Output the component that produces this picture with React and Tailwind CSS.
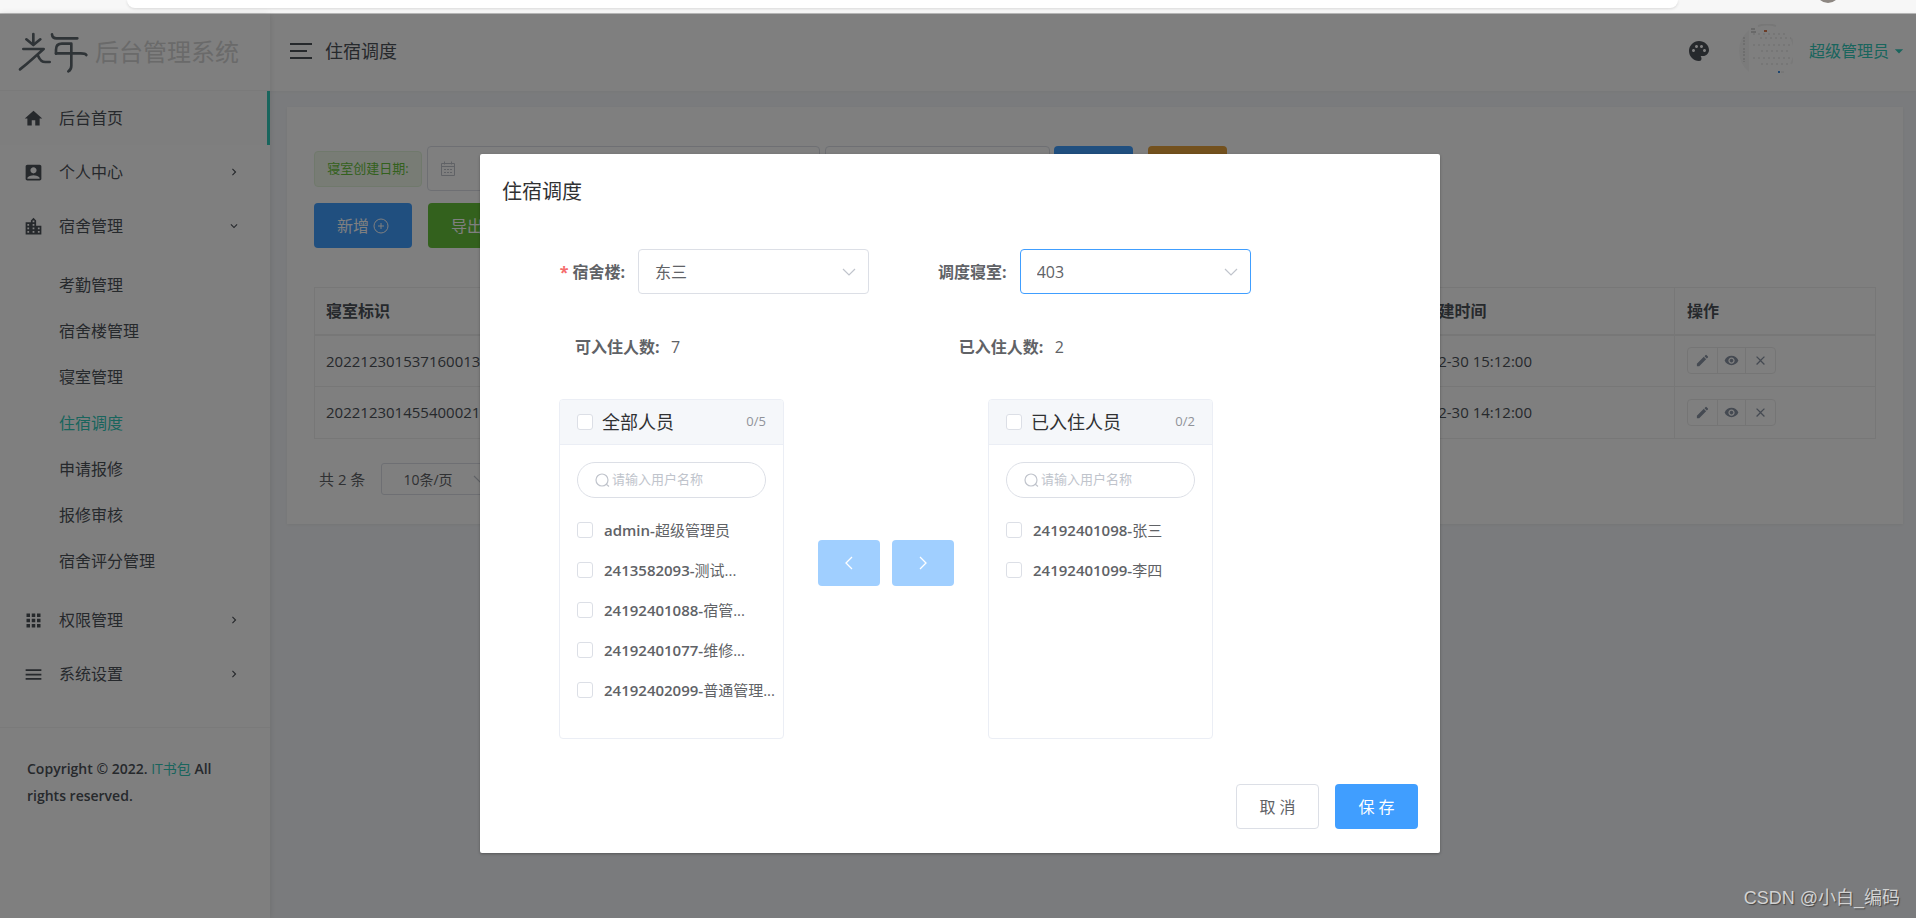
import React, { useState } from "react";
import {
  MdHome,
  MdAccountBox,
  MdLocationCity,
  MdApps,
  MdMenu,
  MdChevronRight,
  MdExpandMore,
  MdPalette,
  MdEdit,
  MdVisibility,
  MdClose,
  MdArrowDropDown,
} from "react-icons/md";

const dormMenu = [
  "考勤管理",
  "宿舍楼管理",
  "寝室管理",
  "住宿调度",
  "申请报修",
  "报修审核",
  "宿舍评分管理",
];

const rooms = [
  { id: "2022123015371600131", created: "2022-12-30 15:12:00" },
  { id: "2022123014554000214", created: "2022-12-30 14:12:00" },
];

const allUsers = [
  { account: "admin", name: "超级管理员" },
  { account: "2413582093", name: "测试..." },
  { account: "24192401088", name: "宿管..." },
  { account: "24192401077", name: "维修..." },
  { account: "24192402099", name: "普通管理..." },
];

const roomUsers = [
  { account: "24192401098", name: "张三" },
  { account: "24192401099", name: "李四" },
];

function Logo() {
  return (
    <svg
      viewBox="50 50 216 129"
      className="w-[72px] h-[43px] text-[#5f686f]"
      fill="none"
      stroke="currentColor"
      strokeWidth="8"
      strokeLinecap="round"
      strokeLinejoin="round"
      aria-hidden="true"
    >
      <path d="M99 59v30" />
      <path d="M78 75l21 17 21-17" />
      <path d="M69 104h61l-33 29q-20 18-38 32" />
      <path d="M113 124q8 19 22 19h13" />
      <path d="M155 60q1 12 14 12h62" />
      <path d="M167 118v-12q0-18 18-18h28v66q0 12-9 17" />
      <path d="M167 117h74q14 0 17 5" />
    </svg>
  );
}

function MenuItem({ icon: Icon, label, active, arrow: Arrow }) {
  return (
    <a
      href="#"
      className={`flex items-center h-[54px] pl-[23px] pr-[29px] ${
        active ? "bg-black/[0.01] border-r-[3px] border-[#33cabb]" : ""
      }`}
    >
      <Icon className="size-[21px]" />
      <span className="ml-[15px] flex-1">{label}</span>
      {Arrow && <Arrow className="size-[14px]" />}
    </a>
  );
}

function Sidebar() {
  return (
    <aside className="w-[270px] shrink-0 bg-white shadow-[0_0_6px_rgba(0,0,0,0.12)] z-10">
      <div className="h-[77px] flex items-center pl-[17px] border-b border-[#f4f4f5]">
        <Logo />
        <span className="ml-[6px] text-2xl text-[#d4d4d4]">后台管理系统</span>
      </div>
      <nav>
        <MenuItem icon={MdHome} label="后台首页" active />
        <MenuItem icon={MdAccountBox} label="个人中心" arrow={MdChevronRight} />
        <MenuItem icon={MdLocationCity} label="宿舍管理" arrow={MdExpandMore} />
        <ul className="py-[9px]">
          {dormMenu.map((name) => (
            <li key={name}>
              <a
                href="#"
                className={`flex items-center h-[46px] pl-[59px] ${
                  name === "住宿调度" ? "text-[#33cabb]" : ""
                }`}
              >
                {name}
              </a>
            </li>
          ))}
        </ul>
        <MenuItem icon={MdApps} label="权限管理" arrow={MdChevronRight} />
        <MenuItem icon={MdMenu} label="系统设置" arrow={MdChevronRight} />
      </nav>
      <p className="mt-[26px] border-t border-[#f4f4f5] pt-[27px] pl-[27px] pr-6 text-[14px] leading-[27px] font-semibold">
        Copyright © 2022.{" "}
        <a href="#" className="font-normal text-[#33cabb]">
          IT书包
        </a>{" "}
        All rights reserved.
      </p>
    </aside>
  );
}

function Avatar() {
  return (
    <svg viewBox="0 0 54 54" className="size-[54px]" aria-hidden="true">
      <circle cx="27" cy="27" r="26.5" fill="#fff" />
      <path d="M10 6v42a27 27 0 0 1-10-21a27 27 0 0 1 10-21z" fill="#f7f7f7" />
      <path d="M52 14a27 27 0 0 1 0 26" stroke="#f3f3f3" strokeWidth="2" fill="none" />
      <path d="M19 2q9-3 18 0" stroke="#eee" strokeWidth="2" fill="none" />
      <path d="M12 5h4M12 8h5" stroke="#d2d2d2" strokeWidth="2" />
      <path d="M25 7h3" stroke="#d97a50" strokeWidth="2" />
      <path d="M5 13v8M5 24v8M5 34v4" stroke="#dcdcdc" strokeWidth="2" strokeDasharray="2 1" />
      <path
        d="M14 10h34M21 14h31M14 21h38M22 27h30M14 34h38M22 40h30"
        stroke="#d9d9d9"
        strokeWidth="1"
        strokeDasharray="2 3"
      />
      <path d="M39 48h2" stroke="#3f8fe0" strokeWidth="2" />
      <path d="M42 48h3" stroke="#e0e0e0" />
    </svg>
  );
}

function TopBar() {
  return (
    <header className="h-[77px] bg-white flex items-center pl-5 pr-[7px] pb-[3px] shadow-[0_0_4px_rgba(0,0,0,0.05)]">
      <button type="button" aria-label="收起菜单" className="flex flex-col gap-[5px]">
        <span className="h-[2px] w-[22px] bg-[#4d5259]" />
        <span className="h-[2px] w-[17px] bg-[#4d5259]" />
        <span className="h-[2px] w-[22px] bg-[#4d5259]" />
      </button>
      <h1 className="ml-[13px] text-lg">住宿调度</h1>
      <button type="button" aria-label="主题" className="ml-auto">
        <MdPalette className="size-6" />
      </button>
      <a href="#" className="ml-7 flex items-center text-[#33cabb]">
        <Avatar />
        <span className="ml-4">超级管理员</span>
        <MdArrowDropDown className="size-5" />
      </a>
    </header>
  );
}

function CalendarIcon() {
  return (
    <svg viewBox="0 0 16 16" className="size-4 text-[#c0c4cc]" fill="none" stroke="currentColor" aria-hidden="true">
      <path d="M1.5 2.5h13v12h-13zM1.5 5.5h13M4.5 0.5v3M11.5 0.5v3" />
      <path d="M4 8.5h8M4 11.5h8" strokeDasharray="2 1" />
    </svg>
  );
}

function RowActions() {
  const btn = "flex items-center justify-center w-[29px] h-[25px] border-[#ebebeb]";
  return (
    <div className="inline-flex align-middle rounded-sm border border-[#ebebeb] text-[#8b95a5]">
      <button type="button" aria-label="编辑" className={btn}>
        <MdEdit className="size-[15px]" />
      </button>
      <button type="button" aria-label="查看" className={`${btn} border-x`}>
        <MdVisibility className="size-[15px]" />
      </button>
      <button type="button" aria-label="删除" className={btn}>
        <MdClose className="size-[15px]" />
      </button>
    </div>
  );
}

function RoomPage() {
  return (
    <section className="mt-4 mr-[13px] ml-[17px] bg-white px-[27px] pt-[39px] pb-[29px] shadow-[0_1px_3px_rgba(0,0,0,0.06)]">
      {/* 搜索栏 */}
      <div className="flex items-center">
        <span className="flex items-center justify-center w-[108px] h-9 rounded bg-[#f0f9eb] border border-[#e1f3d8] text-[13px] text-[#67c23a]">
          寝室创建日期:
        </span>
        <div className="ml-[5px] flex items-center w-[393px] h-[45px] pl-3 rounded border border-[#dcdfe6]">
          <CalendarIcon />
          <input aria-label="寝室创建日期" className="flex-1 outline-none" />
        </div>
        <input aria-label="寝室标识" className="ml-[5px] w-[225px] h-[45px] px-4 rounded border border-[#dcdfe6]" />
        <button type="button" className="ml-1 w-[79px] h-[45px] rounded bg-[#409eff] text-white">
          查询
        </button>
        <button type="button" className="ml-[15px] w-[79px] h-[45px] rounded bg-[#e6a23c] text-white">
          重置
        </button>
      </div>
      <div className="mt-3 flex gap-4">
        <button type="button" className="flex items-center justify-center gap-1 w-[98px] h-[45px] rounded bg-[#409eff] text-white">
          新增
          <svg viewBox="0 0 16 16" className="size-4" fill="none" stroke="currentColor" aria-hidden="true">
            <circle cx="8" cy="8" r="7" />
            <path d="M8 5v6M5 8h6" />
          </svg>
        </button>
        <button type="button" className="w-[98px] h-[45px] pl-[23px] text-left rounded bg-[#67c23a] text-white">
          导出
        </button>
      </div>

      {/* 寝室列表 */}
      <table className="mt-[39px] w-full table-fixed border-collapse text-left text-[15px] border border-[#eeeeee]">
        <thead>
          <tr className="h-[47px] text-base border-b-2 border-[#eeeeee]">
            <th className="pl-[11px] font-bold">寝室标识</th>
            <th className="w-[296px] pl-3 font-bold">寝室创建时间</th>
            <th className="w-[201px] pl-3 font-bold border-l border-[#eeeeee]">操作</th>
          </tr>
        </thead>
        <tbody>
          {rooms.map((room) => (
            <tr key={room.id} className="h-[52px] border-b border-[#eeeeee]">
              <td className="pl-[11px]">{room.id}</td>
              <td className="pl-3">{room.created}</td>
              <td className="pl-3 border-l border-[#eeeeee]">
                <RowActions />
              </td>
            </tr>
          ))}
        </tbody>
      </table>

      <div className="mt-6 flex items-center pl-[5px] text-[#606266]">
        <span className="text-[15px]">共 2 条</span>
        <div className="relative ml-4">
          <select
            aria-label="每页条数"
            className="appearance-none w-[112px] h-8 pl-[21px] rounded-[3px] border border-[#dcdfe6] text-[14px]"
          >
            <option>10条/页</option>
          </select>
          <SelectArrow right="right-[6px]" />
        </div>
      </div>
    </section>
  );
}

function SelectArrow({ right }) {
  return (
    <svg
      viewBox="0 0 14 8"
      className={`absolute top-1/2 -translate-y-1/2 w-[14px] h-2 pointer-events-none text-[#c0c4cc] ${right}`}
      fill="none"
      stroke="currentColor"
      strokeWidth="1.2"
      aria-hidden="true"
    >
      <path d="M1 1l6 6 6-6" />
    </svg>
  );
}

function FormSelect({ id, label, value, required, focused }) {
  return (
    <div className="w-5/12 flex items-center">
      <label htmlFor={id} className="w-[136px] pr-[13px] text-right font-bold">
        {required && <span className="mr-1 text-[#f56c6c]">*</span>}
        {label}:
      </label>
      <div className="relative">
        <select
          id={id}
          className={`appearance-none w-[231px] h-[45px] pl-4 rounded border bg-white text-base outline-none ${
            focused ? "border-[#409eff]" : "border-[#dcdfe6]"
          }`}
        >
          <option>{value}</option>
        </select>
        <SelectArrow right="right-[13px]" />
      </div>
    </div>
  );
}

function CheckBox(props) {
  return (
    <input
      type="checkbox"
      className="appearance-none shrink-0 size-4 rounded-[3px] border border-[#dcdfe6] bg-white checked:bg-[#409eff] checked:border-[#409eff]"
      {...props}
    />
  );
}

function TransferPanel({ title, users }) {
  const [checked, setChecked] = useState([]);
  const [keyword, setKeyword] = useState("");

  const toggle = (account) => {
    setChecked((prev) =>
      prev.includes(account) ? prev.filter((a) => a !== account) : [...prev, account]
    );
  };

  const toggleAll = () => {
    setChecked(checked.length === users.length ? [] : users.map((u) => u.account));
  };

  return (
    <div className="w-[225px] h-[340px] rounded border border-[#ebeef5] overflow-hidden">
      <div className="flex items-center h-[45px] px-[17px] bg-[#f5f7fa] border-b border-[#ebeef5]">
        <label className="flex items-center gap-[9px] text-lg text-[#303133]">
          <CheckBox checked={checked.length === users.length} onChange={toggleAll} />
          {title}
        </label>
        <span className="ml-auto text-[13px] text-[#909399]">
          {checked.length}/{users.length}
        </span>
      </div>
      <div className="mx-[17px] mt-[17px] flex items-center h-9 pl-[17px] rounded-full border border-[#dcdfe6]">
        <svg viewBox="0 0 15 15" className="size-[15px] text-[#c0c4cc]" fill="none" stroke="currentColor" strokeWidth="1.2" aria-hidden="true">
          <circle cx="7" cy="7" r="6" />
          <path d="M11 11l3 2.5" />
        </svg>
        <input
          type="text"
          aria-label="搜索用户"
          placeholder="请输入用户名称"
          value={keyword}
          onChange={(e) => setKeyword(e.target.value)}
          className="ml-[2px] w-[130px] text-[13px] outline-none placeholder:text-[#c0c4cc]"
        />
      </div>
      <ul className="mt-3">
        {users
          .filter((user) => `${user.account}-${user.name}`.includes(keyword))
          .map((user) => (
            <li key={user.account}>
              <label className="flex items-center h-10 pl-[17px] text-[15px] whitespace-nowrap">
                <CheckBox
                  checked={checked.includes(user.account)}
                  onChange={() => toggle(user.account)}
                />
                <span className="ml-[11px]">
                  <span className="font-semibold">{user.account}-</span>
                  {user.name}
                </span>
              </label>
            </li>
          ))}
      </ul>
    </div>
  );
}

function ArrowButton({ label, d }) {
  return (
    <button
      type="button"
      disabled
      aria-label={label}
      className="flex items-center justify-center w-[62px] h-[46px] rounded bg-[#a0cfff] text-white"
    >
      <svg viewBox="0 0 8 14" className="w-2 h-[14px]" fill="none" stroke="currentColor" strokeWidth="1.3" aria-hidden="true">
        <path d={d} />
      </svg>
    </button>
  );
}

function DispatchDialog() {
  return (
    <div
      role="dialog"
      aria-label="住宿调度"
      className="mx-auto w-[960px] max-w-full rounded-xs bg-white px-[22px] pt-[22px] pb-6 text-[#606266] shadow-[0_1px_3px_rgba(0,0,0,0.3)]"
    >
      <h2 className="text-xl leading-8 text-[#303133]">住宿调度</h2>
      <div className="mt-[41px] flex">
        <FormSelect id="building" label="宿舍楼" value="东三" required />
        <FormSelect id="room" label="调度寝室" value="403" focused />
      </div>
      <dl className="mt-10 flex leading-[27px]">
        <div className="w-5/12 flex pl-[73px]">
          <dt className="w-[96px] font-bold">可入住人数:</dt>
          <dd>7</dd>
        </div>
        <div className="w-5/12 flex pl-[75px]">
          <dt className="w-[96px] font-bold">已入住人数:</dt>
          <dd>2</dd>
        </div>
      </dl>
      <div className="mt-[38px] flex items-center pl-[57px]">
        <TransferPanel title="全部人员" users={allUsers} />
        <div className="flex gap-3 px-[34px] pb-3">
          <ArrowButton label="移回左侧" d="M7 1L1 7l6 6" />
          <ArrowButton label="移到右侧" d="M1 1l6 6-6 6" />
        </div>
        <TransferPanel title="已入住人员" users={roomUsers} />
      </div>
      <div className="mt-[45px] flex justify-end gap-4">
        <button type="button" className="w-[83px] h-[45px] rounded border border-[#dcdfe6] bg-white">
          取 消
        </button>
        <button type="button" className="w-[83px] h-[45px] rounded bg-[#409eff] text-white">
          保 存
        </button>
      </div>
    </div>
  );
}

export default function App() {
  return (
    <div className="min-h-screen flex flex-col font-['Open_Sans','Noto_Sans_CJK_SC',sans-serif] text-base text-[#4d5259]">
      {/* 浏览器地址栏下沿 */}
      <div className="relative h-[14px] bg-[#f7f7f7] border-b border-[#b9b9b9] pl-[127px] pr-[238px] overflow-hidden">
        <div className="h-2 rounded-b-2xl bg-white shadow-[0_1px_3px_rgba(0,0,0,0.12)]" />
        <span className="absolute right-[76px] -top-[21px] size-6 rounded-full bg-[#8d8782]" />
      </div>

      <div className="relative flex-1 flex bg-[#f5f7fa]">
        <Sidebar />
        <main className="flex-1 min-w-0">
          <TopBar />
          <RoomPage />
        </main>

        {/* 遮罩层 */}
        <div className="absolute inset-0 z-20 bg-black/50 pt-[140px] pl-1">
          <DispatchDialog />
        </div>
        <p className="absolute right-4 bottom-[6px] z-30 font-['Liberation_Sans','Noto_Sans_CJK_SC',sans-serif] text-lg text-[#d2d2d2] [text-shadow:1px_1px_1px_#444]">
          CSDN @小白_编码
        </p>
      </div>
    </div>
  );
}
